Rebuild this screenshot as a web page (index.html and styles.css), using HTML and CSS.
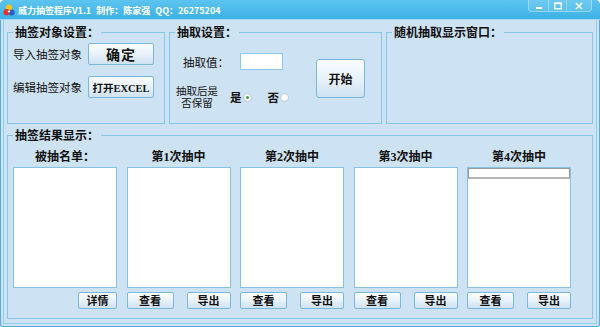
FILE: index.html
```html
<!DOCTYPE html>
<html lang="zh-CN">
<head>
<meta charset="utf-8">
<title>威力抽签程序V1.1</title>
<link rel="stylesheet" href="styles.css">
</head>
<body>
<div class="window">
  <div class="titlebar">
    <svg class="app-icon" viewBox="0 0 12 12" aria-hidden="true">
      <circle cx="6" cy="3.8" r="3.2" fill="#f6c21c"/>
      <circle cx="3.6" cy="8.2" r="3.1" fill="#e2322b"/>
      <circle cx="8.6" cy="8.4" r="3" fill="#2b5fc6"/>
      <circle cx="6" cy="7.4" r="1.2" fill="#ffffff" opacity="0.85"/>
    </svg>
    <span class="title">威力抽签程序V1.1 制作：陈家强 QQ：26275204</span>
    <div class="win-ctrls">
      <span class="ctrl ctrl-min"><svg viewBox="0 0 8 8" width="8" height="8"><rect x="1" y="5" width="6" height="2" fill="#fff"/></svg></span>
      <span class="ctrl ctrl-max"><svg viewBox="0 0 8 8" width="8" height="8"><rect x="0.75" y="1.25" width="6.5" height="5.5" fill="none" stroke="#fff" stroke-width="1.3"/><rect x="0.5" y="0.5" width="7" height="1.6" fill="#fff"/></svg></span>
      <span class="ctrl ctrl-close"><svg viewBox="0 0 8 8" width="8" height="8"><path d="M1 1 L7 7 M7 1 L1 7" stroke="#fff" stroke-width="1.6"/></svg></span>
    </div>
  </div>

  <div class="client">
    <div class="top-row">
      <section class="group group-source">
        <span class="legend">抽签对象设置：</span>
        <div class="source-grid">
          <span class="label">导入抽签对象</span>
          <button class="btn btn-ok">确定</button>
          <span class="label">编辑抽签对象</span>
          <button class="btn btn-excel">打开EXCEL</button>
        </div>
      </section>

      <section class="group group-pick">
        <span class="legend">抽取设置：</span>
        <div class="pick-form">
          <div class="pick-row pick-value">
            <span class="label">抽取值：</span>
            <span class="num-input"></span>
          </div>
          <div class="pick-row pick-keep">
            <span class="keep-label">抽取后是<br>否保留</span>
            <span class="opt">是<span class="radio checked"></span></span>
            <span class="opt">否<span class="radio"></span></span>
          </div>
        </div>
        <button class="btn btn-start">开始</button>
      </section>

      <section class="group group-display">
        <span class="legend">随机抽取显示窗口：</span>
      </section>
    </div>

    <section class="group group-results">
      <span class="legend">抽签结果显示：</span>
      <div class="result-grid">
        <div class="result-col">
          <div class="col-head">被抽名单：</div>
          <div class="list"></div>
          <div class="col-actions end"><button class="btn btn-sm btn-detail">详情</button></div>
        </div>
        <div class="result-col">
          <div class="col-head">第1次抽中</div>
          <div class="list"></div>
          <div class="col-actions"><button class="btn btn-sm btn-view">查看</button><button class="btn btn-sm btn-export">导出</button></div>
        </div>
        <div class="result-col">
          <div class="col-head">第2次抽中</div>
          <div class="list"></div>
          <div class="col-actions"><button class="btn btn-sm btn-view">查看</button><button class="btn btn-sm btn-export">导出</button></div>
        </div>
        <div class="result-col">
          <div class="col-head">第3次抽中</div>
          <div class="list"></div>
          <div class="col-actions"><button class="btn btn-sm btn-view">查看</button><button class="btn btn-sm btn-export">导出</button></div>
        </div>
        <div class="result-col">
          <div class="col-head">第4次抽中</div>
          <div class="list"><div class="list-row"></div></div>
          <div class="col-actions"><button class="btn btn-sm btn-view">查看</button><button class="btn btn-sm btn-export">导出</button></div>
        </div>
      </div>
    </section>
  </div>
</div>
</body>
</html>
```

FILE: styles.css
```css
* { box-sizing: border-box; }

body {
  margin: 0;
  font-family: "Noto Sans CJK SC", "Noto Sans", sans-serif;
  color: #111;
}

.window {
  width: 600px;
  height: 327px;
  background: #cde2f3;
  overflow: hidden;
  border-radius: 5px 5px 3px 3px;
  box-shadow: inset 0 0 0 1px #55acdb, inset 0 0 0 3px #cde2f3, inset 0 0 0 4px #93cdec;
}

/* ---------- title bar ---------- */
.titlebar {
  height: 20px;
  display: flex;
  align-items: flex-start;
  background: linear-gradient(#5cc4ef, #3db1e6);
  border-bottom: 1px solid #a4daf3;
}

.app-icon {
  flex: none;
  width: 12px;
  height: 12px;
  margin: 4px 3px 0 3px;
}

.title {
  color: #fff;
  font-size: 9px;
  font-weight: 700;
  line-height: 20px;
  margin-top: 1px;
  white-space: nowrap;
  word-spacing: 3px;
}

.win-ctrls {
  margin-left: auto;
  margin-right: 8px;
  display: flex;
  height: 12px;
  border: 1px solid rgba(255, 255, 255, 0.35);
  border-top: 0;
  border-radius: 0 0 4px 4px;
  background: rgba(255, 255, 255, 0.1);
  overflow: hidden;
}

.ctrl {
  display: flex;
  align-items: center;
  justify-content: center;
  height: 11px;
}
.ctrl + .ctrl { border-left: 1px solid rgba(255, 255, 255, 0.35); }
.ctrl-min { width: 19px; }
.ctrl-max { width: 18px; }
.ctrl-close { width: 25px; }

/* ---------- client area ---------- */
.client {
  padding: 12px 7px 0 7px;
}

.top-row {
  display: grid;
  grid-template-columns: 158px 213px 207px;
  column-gap: 4px;
  height: 92px;
}

.group {
  position: relative;
  border: 1px solid #86c6e9;
}

.legend {
  position: absolute;
  top: -8px;
  left: 5px;
  padding: 0 2px;
  background: #cde2f3;
  font-size: 12px;
  font-weight: 700;
  line-height: 14px;
  white-space: nowrap;
  color: #111;
}

.label {
  font-size: 11.5px;
  line-height: 14px;
  white-space: nowrap;
  color: #111;
}

/* ---------- buttons ---------- */
.btn {
  font-family: "Noto Sans CJK SC", sans-serif;
  color: #111;
  padding: 0;
  margin: 0;
  border: 1px solid #79b8de;
  border-radius: 2px;
  background: linear-gradient(#fbfdff 0%, #eaf3fb 45%, #cfe2f2 100%);
  box-shadow: inset 0 1px 0 #fff;
  white-space: nowrap;
}

/* ---------- group 1 ---------- */
.source-grid {
  display: grid;
  grid-template-columns: 75px 66px;
  grid-auto-rows: 22px;
  row-gap: 11px;
  align-items: center;
  padding: 10px 0 0 5px;
}

.btn-ok {
  height: 22px;
  font-size: 14px;
  font-weight: 700;
  letter-spacing: 1px;
}

.btn-excel {
  height: 22px;
  font-family: "Liberation Serif", "Noto Sans CJK SC", serif;
  font-size: 10.5px;
  font-weight: 700;
}

/* ---------- group 2 ---------- */
.group-pick {
  display: flex;
  align-items: flex-start;
  padding-top: 20px;
}

.pick-form {
  display: flex;
  flex-direction: column;
  row-gap: 15px;
}

.pick-row {
  display: flex;
  align-items: center;
}

.pick-value {
  height: 17px;
  padding-left: 13px;
}
.pick-value .label { width: 57px; }

.num-input {
  width: 43px;
  height: 17px;
  background: #fff;
  border: 1px solid #8ccaec;
}

.pick-keep {
  height: 24px;
  padding-left: 5px;
}

.keep-label {
  width: 44px;
  text-align: center;
  font-family: "Liberation Sans", "Noto Sans CJK SC", sans-serif;
  font-size: 10.5px;
  line-height: 12px;
  white-space: nowrap;
}

.opt {
  display: flex;
  align-items: center;
  margin-left: 11px;
  font-size: 11.5px;
  font-weight: 700;
  line-height: 14px;
}
.opt + .opt { margin-left: 16px; }

.radio {
  display: grid;
  place-items: center;
  width: 9px;
  height: 9px;
  margin-left: 1px;
  border-radius: 50%;
  border: 1px solid #b9c6cf;
  background: #fff;
}
.radio.checked::after {
  content: "";
  width: 3px;
  height: 3px;
  border-radius: 50%;
  background: #36a836;
}

.btn-start {
  width: 49px;
  height: 39px;
  margin-left: auto;
  margin-right: 16px;
  margin-top: 6px;
  font-size: 12px;
  font-weight: 700;
  border-radius: 3px;
}

/* ---------- results ---------- */
.group-results {
  margin-top: 11px;
  height: 184px;
  padding: 14px 0 0 5px;
}

.result-grid {
  display: grid;
  grid-template-columns: repeat(5, 104px);
  column-gap: 9.5px;
}

.result-col {
  display: flex;
  flex-direction: column;
}

.col-head {
  height: 14px;
  text-align: center;
  font-family: "Liberation Serif", "Noto Sans CJK SC", serif;
  font-size: 12px;
  font-weight: 700;
  line-height: 14px;
  white-space: nowrap;
}

.list {
  margin-top: 3px;
  height: 121px;
  background: #fff;
  border: 1px solid #86c2e6;
}

.list-row {
  height: 11px;
  border: 1px solid #9a9a9a;
  border-bottom: 2px solid #b4b4b4;
  background: #fff;
}

.col-actions {
  margin-top: 4px;
  display: flex;
  justify-content: space-between;
}
.col-actions.end { justify-content: flex-end; }

.btn-sm {
  height: 17px;
  font-size: 11px;
  font-weight: 700;
  line-height: 15px;
}
.btn-detail { width: 39px; }
.btn-view { width: 47px; }
.btn-export { width: 44px; }
```
